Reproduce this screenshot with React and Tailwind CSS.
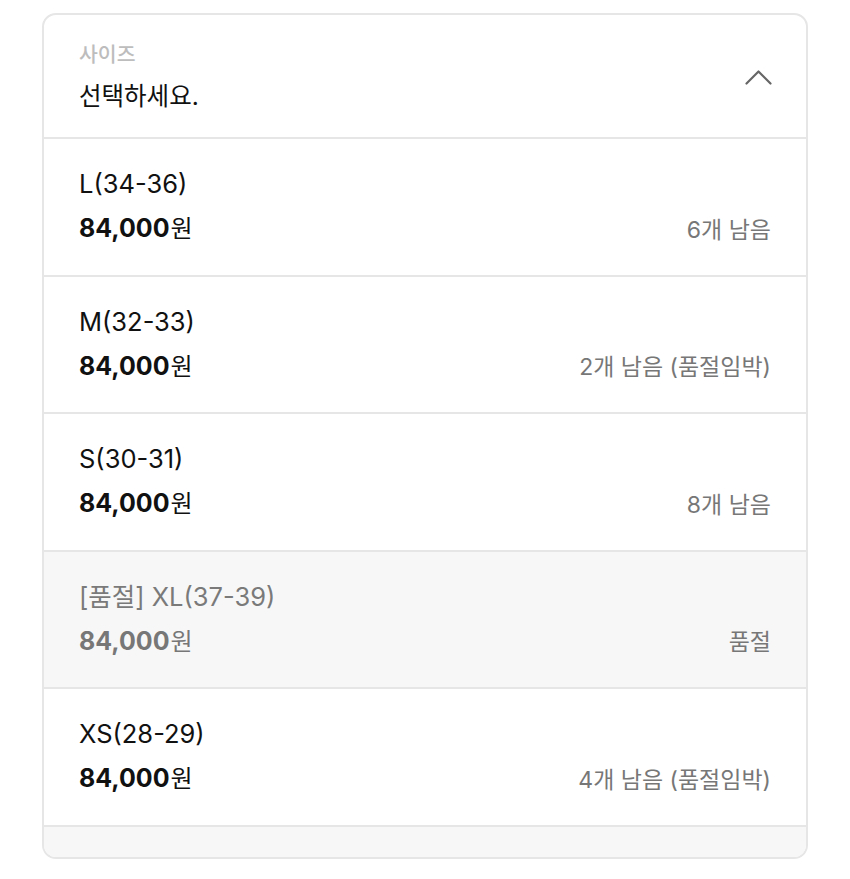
import React from 'react';

const sizes = [
  { label: 'L(34-36)', price: '84,000', stock: '6개 남음' },
  { label: 'M(32-33)', price: '84,000', stock: '2개 남음 (품절임박)' },
  { label: 'S(30-31)', price: '84,000', stock: '8개 남음' },
  { label: 'XL(37-39)', price: '84,000', stock: '품절', soldOut: true },
  { label: 'XS(28-29)', price: '84,000', stock: '4개 남음 (품절임박)' },
  { label: 'XXL(40-42)', price: '84,000', stock: '품절', soldOut: true },
];

const font = { fontFamily: '"Inter", "Noto Sans CJK KR", sans-serif' };

function SizeRow({ item }) {
  return (
    <div
      className={`h-[137.5px] shrink-0 border-t-2 border-[#e6e6e6] pt-[27px] pl-[35px] pr-[35px] ${
        item.soldOut ? 'bg-[#f7f7f7]' : 'bg-white'
      }`}
    >
      <div className={`text-[25.5px] leading-[36px] ${item.soldOut ? 'text-[#7a7a7a]' : 'text-[#111]'}`}>
        {item.soldOut ? `[품절] ${item.label}` : item.label}
      </div>
      <div className="mt-[8px] flex items-center justify-between leading-[36px]">
        <span className={item.soldOut ? 'text-[#777]' : 'text-[#111]'}>
          <span className="text-[25px] font-bold">{item.price}</span>
          <span className="ml-[1px] text-[24px]">원</span>
        </span>
        <span className="text-[23px] text-[#777]">{item.stock}</span>
      </div>
    </div>
  );
}

export default function App() {
  return (
    <div className="min-h-screen bg-white px-[42px] pt-[13px]" style={font}>
      <div className="flex h-[846px] flex-col overflow-hidden rounded-[14px] border-2 border-[#e6e6e6] bg-white">
        {/* Dropdown header */}
        <div className="flex shrink-0 items-center justify-between pt-[26px] pb-[24px] pl-[35px] pr-[34px]">
          <div>
            <div className="text-[20.5px] font-medium leading-[28px] text-[#bdbdbd]">사이즈</div>
            <div className="mt-[10px] text-[24.5px] leading-[34px] text-[#111]">선택하세요.</div>
          </div>
          <svg width="27" height="15" viewBox="0 0 27 15" fill="none">
            <polyline
              points="1.5,13.5 13.5,1.5 25.5,13.5"
              stroke="#666"
              strokeWidth="2.2"
              strokeLinecap="round"
              strokeLinejoin="round"
            />
          </svg>
        </div>

        {/* Size options */}
        {sizes.map((item) => (
          <SizeRow key={item.label} item={item} />
        ))}
      </div>
    </div>
  );
}
